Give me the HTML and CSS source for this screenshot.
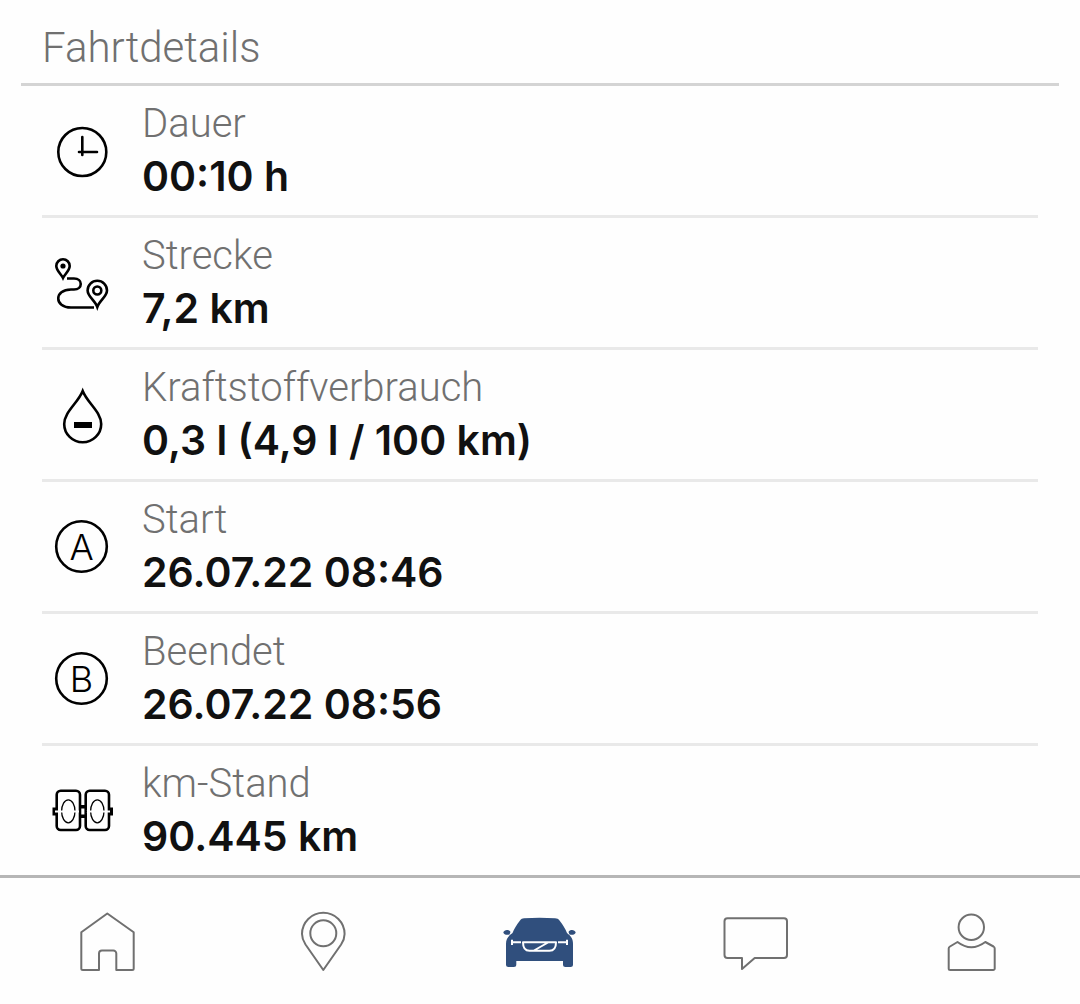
FILE: index.html
```
<!DOCTYPE html>
<html lang="de">
<head>
    <meta charset="UTF-8">
    <meta name="viewport" content="width=device-width, initial-scale=1.0">
    <title>Fahrtdetails</title>
    <link rel="stylesheet" href="styles.css">
</head>
<body>
    <main class="trip">
        <h1 class="title">Fahrtdetails</h1>
        <ul class="details">
            <li class="row">
                <svg class="icon" viewBox="0 0 80 80" aria-hidden="true">
                    <circle cx="40.300" cy="43" r="24"/>
                    <path d="M40.3 28v18M37 43h18" stroke-linecap="round"/>
                </svg>
                <div class="text">
                    <div class="label">Dauer</div>
                    <div class="value">00:10 h</div>
                </div>
            </li>
            <li class="row">
                <svg class="icon" viewBox="0 0 80 80" aria-hidden="true">
                    <path d="M21 37C19 33 14.300 29.500 14.300 25a6.700 6.700 0 0 1 13.400 0C27.700 29.500 23 33 21 37z"/>
                    <circle class="solid" cx="21" cy="25" r="2.600"/>
                    <path d="M25 37.500h7c9 0 9 11 0 11h-3c-17 0-17 18 0 18h23"/>
                    <path d="M55.300 66C53 59.500 45.600 55.500 45.600 49.500a9.700 9.700 0 0 1 19.400 0C65 55.500 57.600 59.500 55.300 66z"/>
                    <circle cx="55.300" cy="49.500" r="4"/>
                </svg>
                <div class="text">
                    <div class="label">Strecke</div>
                    <div class="value">7,2 km</div>
                </div>
            </li>
            <li class="row">
                <svg class="icon" viewBox="0 0 80 80" aria-hidden="true">
                    <path d="M40.700 18C36 30 22.200 39 22.200 51a18.500 18.300 0 0 0 37 0C59.200 39 45.400 30 40.700 18z"/>
                    <path class="solid" d="M32 49h18v6H32z"/>
                </svg>
                <div class="text">
                    <div class="label">Kraftstoffverbrauch</div>
                    <div class="value">0,3 l (4,9 l / 100 km)</div>
                </div>
            </li>
            <li class="row">
                <svg class="icon" viewBox="0 0 80 80" aria-hidden="true">
                    <circle cx="39.500" cy="41.500" r="25.300"/>
                    <text class="letter" x="39.500" y="55">A</text>
                </svg>
                <div class="text">
                    <div class="label">Start</div>
                    <div class="value">26.07.22 08:46</div>
                </div>
            </li>
            <li class="row">
                <svg class="icon" viewBox="0 0 80 80" aria-hidden="true">
                    <circle cx="39.500" cy="41.500" r="25.300"/>
                    <text class="letter" x="39.500" y="55">B</text>
                </svg>
                <div class="text">
                    <div class="label">Beendet</div>
                    <div class="value">26.07.22 08:56</div>
                </div>
            </li>
            <li class="row">
                <svg class="icon" viewBox="0 0 80 80" aria-hidden="true">
                    <rect x="14.700" y="21.700" width="23.300" height="39.300" rx="4"/>
                    <rect x="43.700" y="21.700" width="23.300" height="39.300" rx="4"/>
                    <path class="solid" d="M10.500 38.500h4v8h-4zM67.500 38.500h3.500v8h-3.500zM38 36h6v3.500h-6zM38 45.500h6v3.500h-6z"/>
                    <g class="thin">
                        <ellipse cx="26.300" cy="42.300" rx="6.700" ry="11.500"/>
                        <ellipse cx="55.300" cy="42.300" rx="6.700" ry="11.500"/>
                    </g>
                    <path class="gap" d="M13 42.500h24M44.500 42.500h23.500"/>
                    <path class="solid" d="M37 41.500h2v2h-2zM43 41.500h2v2h-2z"/>
                </svg>
                <div class="text">
                    <div class="label">km-Stand</div>
                    <div class="value">90.445 km</div>
                </div>
            </li>
        </ul>
    </main>
    <nav class="tabs">
        <a class="tab" href="#home" aria-label="Start">
            <svg class="tab-icon" viewBox="0 0 80 80">
                <path d="M39.300 12.500L65.700 31.300V67.500a1.500 1.500 0 0 1-1.500 1.500H48.300V52.500a3 3 0 0 0-3-3H34a3 3 0 0 0-3 3V69H14.800a1.500 1.500 0 0 1-1.500-1.500V31.300z"/>
            </svg>
        </a>
        <a class="tab" href="#map" aria-label="Karte">
            <svg class="tab-icon" viewBox="0 0 80 80">
                <path d="M39.300 69L21.500 43.500C19.200 40 18 36.500 18 33a21.300 21.300 0 0 1 42.600 0C60.600 36.500 59.400 40 57.100 43.500z"/>
                <circle cx="39.300" cy="32.300" r="13"/>
            </svg>
        </a>
        <a class="tab" href="#car" aria-label="Auto">
            <svg class="tab-icon" viewBox="0 0 80 80">
                <path class="car" d="M20 19.500C21 18 22.500 17.500 24 17.300C34 16.500 45 16.500 55 17.300C57 17.500 58.500 18 59.500 19.500C63 24 65.500 28 67 32C71 35 73 38 73 43V63.500Q73 66 70.500 66H65.500Q63 66 63 63.500V60H16.300V63.500Q16.300 66 13.800 66H8.500Q6 66 6 63.500V43C6 38 8 35 12.500 32C14 28 16.500 24 20 19.500z"/>
                <path class="car" d="M3.300 31.500C4 28.500 9 28 10.500 31L9.500 33.500C7 34 4 34 3.300 31.500zM75.700 31.500C75 28.500 70 28 68.500 31L69.500 33.500C72 34 75 34 75.700 31.500z"/>
                <path class="car-line" d="M12 38.800v5.200M12 41.300h9M67 38.800v5.200M67 41.300h-9M23 41.300h33q0 8.500-6.500 8.500h-20q-6.500 0-6.500-8.500zM34 49.500L48 41.500"/>
            </svg>
        </a>
        <a class="tab" href="#messages" aria-label="Nachrichten">
            <svg class="tab-icon" viewBox="0 0 80 80">
                <path d="M11.500 17.300H68a3 3 0 0 1 3 3V54a3 3 0 0 1-3 3H38.700L26 68V57H11.500a3 3 0 0 1-3-3V20.300a3 3 0 0 1 3-3z"/>
            </svg>
        </a>
        <a class="tab" href="#profile" aria-label="Profil">
            <svg class="tab-icon" viewBox="0 0 80 80">
                <circle cx="39.300" cy="26.300" r="12.700"/>
                <path d="M25.500 41Q39.300 51.500 53.300 41L61.500 45.500Q62.700 46.300 62.700 47.500V67.500a1.500 1.500 0 0 1-1.500 1.500H18.200a1.500 1.500 0 0 1-1.500-1.500V47.500Q16.700 46.300 18 45.500z"/>
            </svg>
        </a>
    </nav>
</body>
</html>
```
FILE: styles.css
```
body {
    margin: 0;
    min-height: 100vh;
    display: flex;
    flex-direction: column;
    background-color: #fefefe;
    font-family: Inter, "Liberation Sans", sans-serif;
}
.trip {
    flex: 1;
}
.title {
    margin: 0 21px;
    padding: 22px 21px 9px;
    border-bottom: 3px solid #d4d4d4;
    color: #707070;
    font-family: Roboto, "Liberation Sans", sans-serif;
    font-size: 42px;
    font-weight: 300;
    line-height: 52px;
}
.details {
    list-style: none;
    margin: 0 42px;
    padding: 0;
}
.row {
    display: flex;
    align-items: center;
    gap: 20px;
    padding: 11px 0 14px;
    border-bottom: 3px solid #e9e9e9;
}
.row:last-child {
    border-bottom: none;
}
.icon,
.tab-icon {
    width: 80px;
    height: 80px;
    flex: none;
    fill: none;
    stroke: #000;
    stroke-width: 3;
}
.icon {
    stroke-width: 2.600;
}
.solid {
    fill: #000;
    stroke: none;
}
.thin {
    stroke-width: 1.300;
}
.gap {
    stroke: #fefefe;
    stroke-width: 2;
}
.letter {
    fill: #000;
    stroke: none;
    font-size: 36px;
    font-weight: 300;
    text-anchor: middle;
}
.label {
    color: #707070;
    font-family: Roboto, "Liberation Sans", sans-serif;
    font-size: 40px;
    font-weight: 300;
    line-height: 54px;
}
.value {
    color: #111;
    font-size: 41px;
    font-weight: 600;
    line-height: 50px;
}
.tabs {
    display: flex;
    border-top: 3px solid #b6b6b6;
}
.tab {
    flex: 1;
    display: flex;
    justify-content: center;
    padding: 23px 0;
}
.tab-icon {
    stroke: #707070;
    stroke-width: 2;
    stroke-linejoin: round;
}
.car {
    fill: #304f7d;
    stroke: none;
}
.car-line {
    stroke: #fefefe;
}
```
